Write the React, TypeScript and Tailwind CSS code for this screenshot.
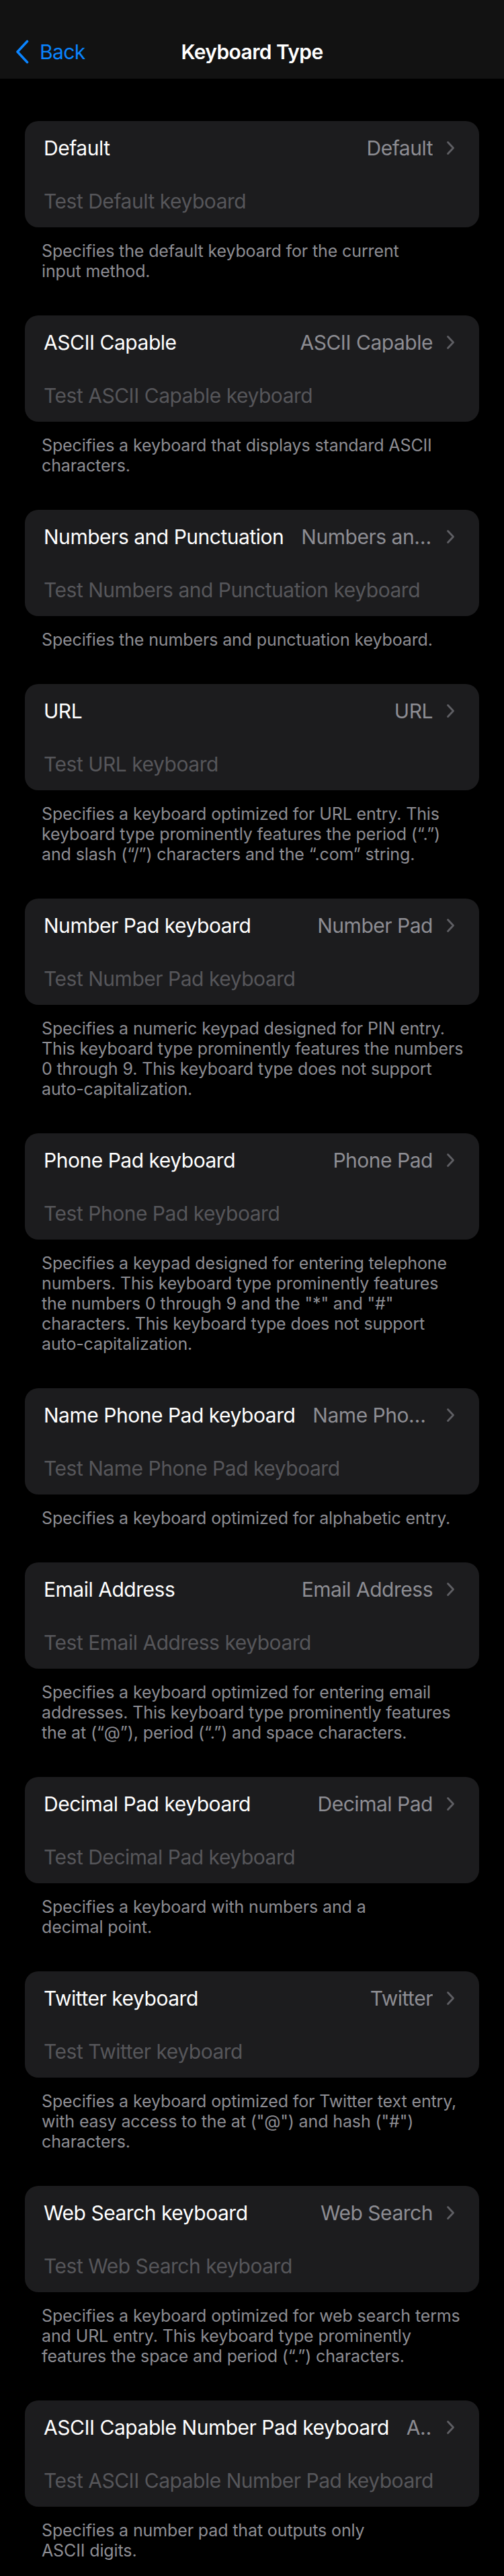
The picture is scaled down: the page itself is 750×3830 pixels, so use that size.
const items = [
	{
		label: 'Default',
		value: 'Default',
		placeholder: 'Test Default keyboard',
		footer: ['Specifies the default keyboard for the current', 'input method.'],
	},
	{
		label: 'ASCII Capable',
		value: 'ASCII Capable',
		placeholder: 'Test ASCII Capable keyboard',
		footer: ['Specifies a keyboard that displays standard ASCII', 'characters.'],
	},
	{
		label: 'Numbers and Punctuation',
		value: 'Numbers and Punctuation',
		placeholder: 'Test Numbers and Punctuation keyboard',
		footer: ['Specifies the numbers and punctuation keyboard.'],
	},
	{
		label: 'URL',
		value: 'URL',
		placeholder: 'Test URL keyboard',
		footer: [
			'Specifies a keyboard optimized for URL entry. This',
			'keyboard type prominently features the period (“.”)',
			'and slash (“/”) characters and the “.com” string.',
		],
	},
	{
		label: 'Number Pad keyboard',
		value: 'Number Pad',
		placeholder: 'Test Number Pad keyboard',
		footer: [
			'Specifies a numeric keypad designed for PIN entry.',
			'This keyboard type prominently features the numbers',
			'0 through 9. This keyboard type does not support',
			'auto-capitalization.',
		],
	},
	{
		label: 'Phone Pad keyboard',
		value: 'Phone Pad',
		placeholder: 'Test Phone Pad keyboard',
		footer: [
			'Specifies a keypad designed for entering telephone',
			'numbers. This keyboard type prominently features',
			'the numbers 0 through 9 and the "*" and "#"',
			'characters. This keyboard type does not support',
			'auto-capitalization.',
		],
	},
	{
		label: 'Name Phone Pad keyboard',
		value: 'Name Phone Pad',
		placeholder: 'Test Name Phone Pad keyboard',
		footer: ['Specifies a keyboard optimized for alphabetic entry.'],
	},
	{
		label: 'Email Address',
		value: 'Email Address',
		placeholder: 'Test Email Address keyboard',
		footer: [
			'Specifies a keyboard optimized for entering email',
			'addresses. This keyboard type prominently features',
			'the at (“@”), period (“.”) and space characters.',
		],
	},
	{
		label: 'Decimal Pad keyboard',
		value: 'Decimal Pad',
		placeholder: 'Test Decimal Pad keyboard',
		footer: ['Specifies a keyboard with numbers and a', 'decimal point.'],
	},
	{
		label: 'Twitter keyboard',
		value: 'Twitter',
		placeholder: 'Test Twitter keyboard',
		footer: [
			'Specifies a keyboard optimized for Twitter text entry,',
			'with easy access to the at ("@") and hash ("#")',
			'characters.',
		],
	},
	{
		label: 'Web Search keyboard',
		value: 'Web Search',
		placeholder: 'Test Web Search keyboard',
		footer: [
			'Specifies a keyboard optimized for web search terms',
			'and URL entry. This keyboard type prominently',
			'features the space and period (“.”) characters.',
		],
	},
	{
		label: 'ASCII Capable Number Pad keyboard',
		value: 'ASCII Capable Number Pad',
		placeholder: 'Test ASCII Capable Number Pad keyboard',
		footer: ['Specifies a number pad that outputs only', 'ASCII digits.'],
	},
];

function Chevron() {
	return (
		<svg className="w-[13px] h-[22px] shrink-0" viewBox="0 0 13 22" fill="none">
			<path
				d="M2.5 2.5 L10.5 11 L2.5 19.5"
				stroke="#5f5f64"
				strokeWidth="2.8"
				strokeLinecap="round"
				strokeLinejoin="round"
			/>
		</svg>
	);
}

export default function App() {
	return (
		<div className="min-h-[3830px] w-[750px] bg-black font-['Inter',sans-serif]">
			{/* nav bar */}
			<header className="h-[117px] bg-[#121212] flex items-end">
				<div className="relative h-[80px] w-full flex items-center">
					<div className="flex items-center pl-[22px] text-[#0a84ff]">
						<svg className="w-[22px] h-[36px]" viewBox="0 0 22 36" fill="none">
							<path
								d="M18.5 2.5 L4 18 L18.5 33.5"
								stroke="currentColor"
								strokeWidth="3.6"
								strokeLinecap="round"
								strokeLinejoin="round"
							/>
						</svg>
						<span className="ml-[15px] text-[30px] leading-none tracking-[-0.02em]">Back</span>
					</div>
					<h1 className="absolute inset-x-0 text-center text-white text-[30px] font-semibold leading-none tracking-[-0.02em] pointer-events-none">
						Keyboard Type
					</h1>
				</div>
			</header>

			<main className="pt-[63px]">
				{items.map((item) => (
					<section key={item.label}>
						<div className="mx-[37px] rounded-[20px] bg-[#1c1c1e] px-[28px] tracking-[-0.03em]">
							<div className="h-[80px] flex items-center">
								<span className="shrink-0 text-white text-[30px] leading-none whitespace-nowrap">
									{item.label}
								</span>
								<span className="ml-[26px] min-w-0 flex-1 text-right text-[#8d8d93] text-[30px] leading-none truncate">
									{item.value}
								</span>
								<span className="ml-[20px] mr-[8px]">
									<Chevron />
								</span>
							</div>
							<div className="h-[78px] flex items-center text-[30px] leading-none text-[#56565a]">
								{item.placeholder}
							</div>
						</div>
						<div className="pl-[62px] pt-[20px] pb-[51px] text-[25px] leading-[30px] tracking-[-0.005em] text-[#8d8d93]">
							{item.footer.map((line) => (
								<div key={line} className="whitespace-nowrap">
									{line}
								</div>
							))}
						</div>
					</section>
				))}
			</main>
		</div>
	);
}
